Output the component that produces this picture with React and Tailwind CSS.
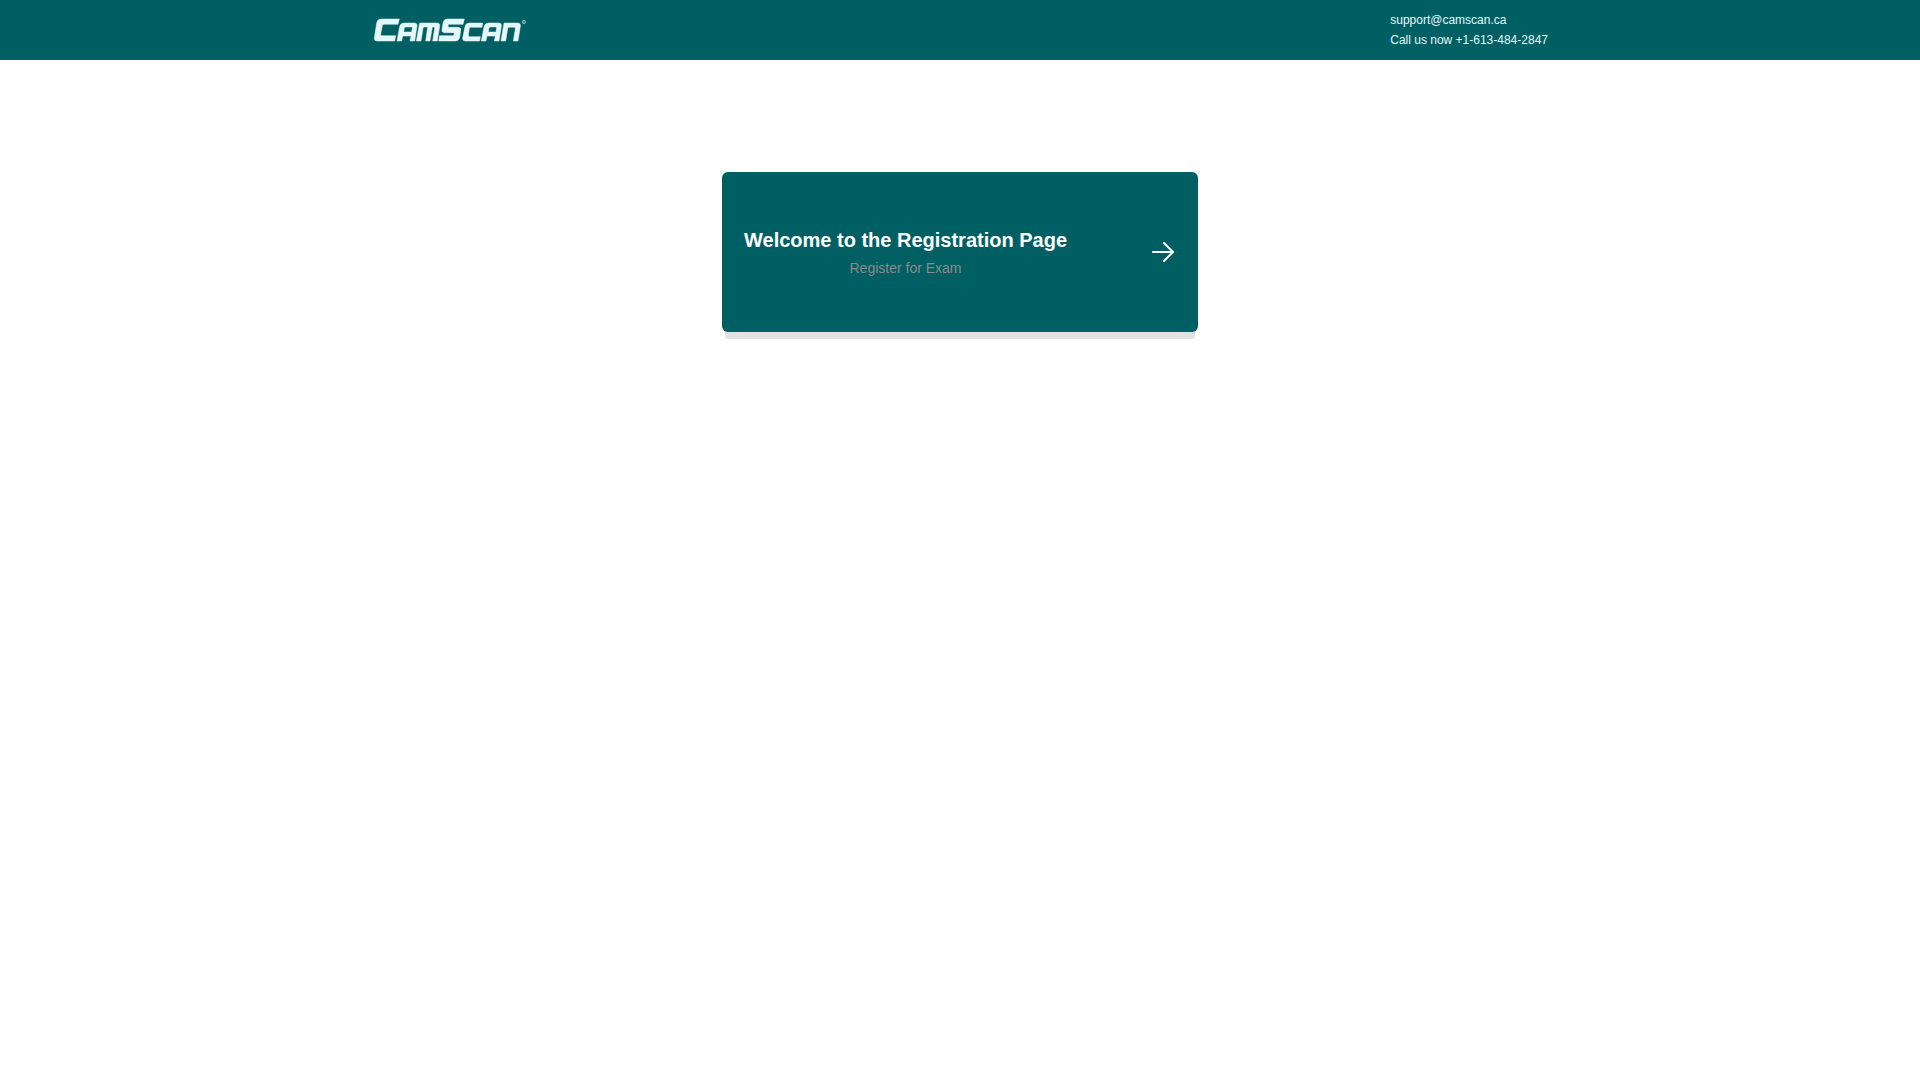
function Logo() {
  return (
    <svg
      viewBox="36 51 468 78"
      className="block h-[26px] w-[156px]"
      role="img"
      aria-label="CamScan"
    >
      <g fill="#e6f7fa" stroke="#e6f7fa" strokeWidth="1.5">
        <path d="M63 57H118L114 73H72Q68 73 67 77L62 102Q61 107 65 107H107L104 123H51Q42 123 43 114L50 69Q52 57 63 57Z" />
        <path
          fillRule="evenodd"
          d="M133 69H162Q173 69 171 79L164 123H150L153 108H128L125 123H111L119 80Q121 69 133 69ZM137 81Q134 81 133 84L131 96H155L157 84Q158 81 155 81Z"
        />
        <path d="M179 69H230Q241 69 239 79L232 123H218L224 85Q225 81 221 81H217L210 123H197L203 81H193Q190 81 189 85L183 123H169Z" />
        <path d="M262 57H313L309 73H269Q265 73 264 77Q263 82 268 82H294Q304 82 302 92L299 112Q297 123 286 123H236L239 107H278Q282 107 283 102Q284 98 279 98H254Q244 98 246 88L249 69Q251 57 262 57Z" />
        <path d="M327 69H368L366 82H332Q329 82 328 85L325 106Q325 110 329 110H361L359 123H316Q307 123 308 114L315 80Q317 69 327 69Z" />
        <path
          fillRule="evenodd"
          d="M387 69H415Q426 69 424 79L417 123H403L406 108H381L378 123H364L372 80Q374 69 387 69ZM391 81Q388 81 387 84L385 96H408L410 84Q411 81 408 81Z"
        />
        <path d="M432 69H472Q483 69 481 79L474 123H460L466 86Q467 82 463 82H447Q444 82 443 86L437 123H423Z" />
      </g>
      <circle cx="492" cy="66" r="5" fill="none" stroke="#e6f7fa" strokeWidth="2" opacity="0.8" />
      <path d="M490 69V63H493Q495 65 493 66H490M492 66L494 69" fill="none" stroke="#e6f7fa" strokeWidth="1" opacity="0.8" />
    </svg>
  );
}

function Arrow() {
  return (
    <svg
      viewBox="0 0 24 24"
      className="h-6 w-6 shrink-0"
      fill="none"
      stroke="white"
      strokeWidth="2"
      strokeLinecap="round"
      strokeLinejoin="round"
      aria-hidden="true"
    >
      <path d="M3 12H23M14 3L23 12L14 21" />
    </svg>
  );
}

export default function App() {
  return (
    <div className="min-h-screen bg-white font-['Liberation_Sans',Arial,sans-serif]">
      <header className="bg-[#005f63]">
        <div className="mx-auto flex max-w-[1200px] items-center justify-between px-3 py-2.5">
          <a href="#home">
            <Logo />
          </a>
          <address className="flex flex-col text-xs leading-5 text-[#e6f7fa] not-italic">
            <a href="mailto:support@camscan.ca">support@camscan.ca</a>
            <a href="tel:+16134842847">Call us now +1-613-484-2847</a>
          </address>
        </div>
      </header>
      <main className="flex justify-center px-4 pt-28">
        <a
          href="#register"
          className="flex min-h-40 w-full max-w-[476px] items-center justify-between rounded-md bg-[#005f63] pr-6 pl-[22px] shadow-[0_10px_0_-3px_#e2e2e2]"
        >
          <div className="text-center">
            <h1 className="text-xl leading-8 font-bold text-white">
              Welcome to the Registration Page
            </h1>
            <p className="text-sm leading-6 text-[#8b8b8b]">Register for Exam</p>
          </div>
          <Arrow />
        </a>
      </main>
    </div>
  );
}
